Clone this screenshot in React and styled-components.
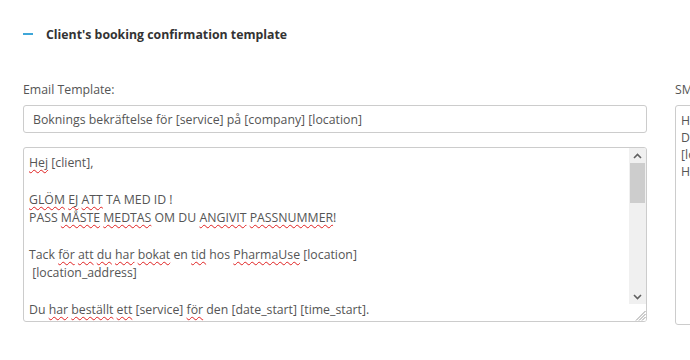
import React from "react";
import styled, { createGlobalStyle } from "styled-components";

const Global = createGlobalStyle`
  html, body {
    margin: 0;
    padding: 0;
    background: #fff;
    overflow: hidden;
  }
  body {
    font-family: "Open Sans", "Liberation Sans", sans-serif;
    color: #555;
  }
`;

const Page = styled.div`
  padding: 24px 0 0 23px;
  width: 960px;
`;

const Heading = styled.div`
  display: flex;
  align-items: center;
  gap: 13px;
  height: 20px;
  font-size: 12.3px;
  font-weight: 700;
  color: #333;
`;

const Dash = styled.span`
  width: 10px;
  height: 2px;
  background: #3ea6d8;
`;

const Columns = styled.div`
  display: grid;
  grid-template-columns: 624px 300px;
  column-gap: 28px;
  margin-top: 37px;
`;

const Field = styled.div`
  display: flex;
  flex-direction: column;
`;

const Label = styled.label`
  font-size: 12.3px;
  line-height: 17px;
  color: #555;
  margin-bottom: 7px;
`;

const Input = styled.div`
  height: 28px;
  box-sizing: border-box;
  border: 1px solid #ccc;
  border-radius: 3px;
  padding: 0 9px;
  display: flex;
  align-items: center;
  font-size: 12.3px;
  color: #555;
  margin-bottom: 14px;
`;

const Box = styled.div`
  box-sizing: border-box;
  height: ${(p) => p.$h}px;
  border: 1px solid #ccc;
  border-radius: 3px;
  display: grid;
  grid-template-columns: 1fr ${(p) => (p.$scroll ? "17px" : "0")};
  overflow: hidden;
`;

const Content = styled.div`
  padding: ${(p) => p.$pad};
  font-size: 12.3px;
  line-height: ${(p) => p.$lh}px;
  color: #555;
  white-space: pre;
  overflow: hidden;
`;

const Miss = styled.span`
  text-decoration: underline wavy #e02020;
  text-decoration-thickness: 1px;
  text-underline-offset: 1.5px;
  text-decoration-skip-ink: none;
`;

const Scrollbar = styled.div`
  display: flex;
  flex-direction: column;
  background: #f0f0f0;
`;

const Arrow = styled.div`
  height: 15px;
  display: flex;
  align-items: center;
  justify-content: center;
`;

const Track = styled.div`
  flex: 1;
`;

const Thumb = styled.div`
  margin: 0 1px;
  height: 40px;
  background: #cdcdcd;
`;

const Corner = styled.div`
  height: 17px;
  background: #fff;
  display: flex;
  align-items: flex-end;
  justify-content: flex-end;
`;

const Chevron = ({ up }) => (
  <svg width="9" height="6" viewBox="0 0 9 6">
    <path
      d={up ? "M1 5 L4.5 1.5 L8 5" : "M1 1 L4.5 4.5 L8 1"}
      fill="none"
      stroke="#606060"
      strokeWidth="1.6"
    />
  </svg>
);

const Grip = () => (
  <svg width="12" height="12" viewBox="0 0 12 12">
    <g stroke="#9a9a9a" strokeWidth="1">
      <line x1="2" y1="11.5" x2="11.5" y2="2" />
      <line x1="5" y1="11.5" x2="11.5" y2="5" />
      <line x1="8" y1="11.5" x2="11.5" y2="8" />
    </g>
  </svg>
);

export default function App() {
  return (
    <Page>
      <Global />
      <Heading>
        <Dash />
        Client's booking confirmation template
      </Heading>
      <Columns>
        <Field>
          <Label>Email Template:</Label>
          <Input>Boknings bekräftelse för [service] på [company] [location]</Input>
          <Box $h={175} $scroll>
            <Content $pad="6px 5px" $lh={18.4}>
              <Miss>Hej</Miss> [client],{"\n"}
              {"\n"}
              <Miss>GLÖM</Miss> <Miss>EJ</Miss> <Miss>ATT</Miss> TA MED ID !{"\n"}
              PASS <Miss>MÅSTE</Miss> <Miss>MEDTAS</Miss> OM DU <Miss>ANGIVIT</Miss>{" "}
              <Miss>PASSNUMMER</Miss>!{"\n"}
              {"\n"}
              Tack <Miss>för</Miss> <Miss>att</Miss> <Miss>du</Miss> <Miss>har</Miss>{" "}
              <Miss>bokat</Miss> en <Miss>tid</Miss> hos <Miss>PharmaUse</Miss> [location]{"\n"}
              {" "}[location_address]{"\n"}
              {"\n"}
              Du <Miss>har</Miss> <Miss>beställt</Miss> <Miss>ett</Miss> [service]{" "}
              <Miss>för</Miss> den [date_start] [time_start].
            </Content>
            <Scrollbar>
              <Arrow>
                <Chevron up />
              </Arrow>
              <Track>
                <Thumb />
              </Track>
              <Arrow>
                <Chevron />
              </Arrow>
              <Corner>
                <Grip />
              </Corner>
            </Scrollbar>
          </Box>
        </Field>
        <Field>
          <Label>SMS Template:</Label>
          <Box $h={220}>
            <Content $pad="6px 5px" $lh={17}>
              Hej [client],{"\n"}
              Du har bokat en tid hos PharmaUse{"\n"}
              [location] [date_start] [time_start]{"\n"}
              Hälsningar PharmaUse
            </Content>
          </Box>
        </Field>
      </Columns>
    </Page>
  );
}
